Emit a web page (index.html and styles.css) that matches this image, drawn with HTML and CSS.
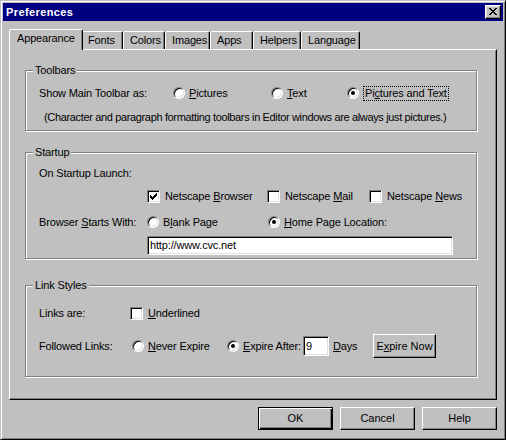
FILE: index.html
```html
<!DOCTYPE html>
<html lang="en">
<head>
<meta charset="utf-8">
<title>Preferences</title>
<link rel="stylesheet" href="styles.css">
</head>
<body>
<div class="window">
  <div class="titlebar">
    <span class="title">Preferences</span>
    <span class="close">
      <svg width="8" height="7" viewBox="0 0 8 7" shape-rendering="crispEdges"><path fill="#000" d="M0 0h2v1h-2z M6 0h2v1h-2z M1 1h2v1h-2z M5 1h2v1h-2z M2 2h4v1h-4z M3 3h2v1h-2z M2 4h4v1h-4z M1 5h2v1h-2z M5 5h2v1h-2z M0 6h2v1h-2z M6 6h2v1h-2z"/></svg>
    </span>
  </div>

  <div class="tabs">
    <div class="tab active w-appearance">Appearance</div>
    <div class="tab w-fonts">Fonts</div>
    <div class="tab w-colors">Colors</div>
    <div class="tab w-images">Images</div>
    <div class="tab w-apps">Apps</div>
    <div class="tab w-helpers">Helpers</div>
    <div class="tab w-language">Language</div>
  </div>

  <div class="panel">
    <div class="group g-toolbars">
      <div class="group-title">Toolbars</div>
      <div class="row t-row1">
        <span class="lbl-show">Show Main Toolbar as:</span>
        <span class="opt opt-pictures"><span class="radio"></span><span><span class="k">P</span>ictures</span></span>
        <span class="opt opt-text"><span class="radio"></span><span><span class="k">T</span>ext</span></span>
        <span class="opt"><span class="radio on"></span><span class="focus">Pi<span class="k">c</span>tures and Text</span></span>
      </div>
      <div class="row t-note">(Character and paragraph formatting toolbars in Editor windows are always just pictures.)</div>
    </div>

    <div class="group g-startup">
      <div class="group-title">Startup</div>
      <div class="row s-launch">On Startup Launch:</div>
      <div class="row s-checks">
        <span class="opt opt-c opt-browser"><span class="check"><svg width="7" height="7" viewBox="0 0 7 7" shape-rendering="crispEdges"><path fill="#000" d="M6 0h1v1h-1z M5 1h2v1h-2z M0 2h1v1h-1z M4 2h3v1h-3z M0 3h2v1h-2z M3 3h3v1h-3z M0 4h5v1h-5z M1 5h3v1h-3z M2 6h1v1h-1z"/></svg></span><span>Netscape <span class="k">B</span>rowser</span></span>
        <span class="opt opt-c opt-mail"><span class="check"></span><span>Netscape <span class="k">M</span>ail</span></span>
        <span class="opt opt-c"><span class="check"></span><span>Netscape <span class="k">N</span>ews</span></span>
      </div>
      <div class="row s-starts">
        <span class="lbl-starts">Browser <span class="k">S</span>tarts With:</span>
        <span class="opt opt-blank"><span class="radio"></span><span>B<span class="k">l</span>ank Page</span></span>
        <span class="opt"><span class="radio on"></span><span><span class="k">H</span>ome Page Location:</span></span>
      </div>
      <div class="field url">http://www.cvc.net</div>
    </div>

    <div class="group g-links">
      <div class="group-title">Link Styles</div>
      <div class="row l-links">
        <span class="lbl-links">Links are:</span>
        <span class="opt opt-c"><span class="check"></span><span><span class="k">U</span>nderlined</span></span>
      </div>
      <div class="row l-followed">
        <span class="lbl-followed">Followed Links:</span>
        <span class="opt opt-never"><span class="radio"></span><span><span class="k">N</span>ever Expire</span></span>
        <span class="opt"><span class="radio on"></span><span class="lbl-after"><span class="k">E</span>xpire After:</span></span>
        <span class="field days-field">9</span>
        <span class="lbl-days"><span class="k">D</span>ays</span>
        <button class="btn btn-expire">E<span class="k">x</span>pire Now</button>
      </div>
    </div>
  </div>

  <div class="buttons">
    <button class="btn btn-main default">OK</button>
    <button class="btn btn-main">Cancel</button>
    <button class="btn btn-main">Help</button>
  </div>
</div>
</body>
</html>
```

FILE: styles.css
```css
* { box-sizing: border-box; }

html, body { margin: 0; padding: 0; }

body {
  background: #c0c0c0;
  font-family: "Liberation Sans", Arial, sans-serif;
  font-size: 11px;
  line-height: 13px;
  letter-spacing: -0.15px;
  color: #000;
}

.k { text-decoration: underline; }

.window {
  width: 506px;
  height: 440px;
  padding: 2px;
  border: 1px solid;
  border-color: #c0c0c0 #000 #000 #c0c0c0;
  box-shadow: inset 1px 1px #fff, inset -1px -1px #808080;
  background: #c0c0c0;
}

.titlebar {
  height: 18px;
  background: #000080;
  display: flex;
  align-items: center;
  padding: 0 2px 0 3px;
}

.title { color: #fff; font-weight: bold; letter-spacing: 0.4px; }

.close {
  margin-left: auto;
  width: 16px;
  height: 14px;
  display: flex;
  align-items: center;
  justify-content: center;
  padding-bottom: 1px;
  background: #c0c0c0;
  border: 1px solid;
  border-color: #fff #000 #000 #fff;
  box-shadow: inset -1px -1px #808080, inset 1px 1px #dfdfdf;
}
.close svg { display: block; }

/* tabs */
.tabs {
  display: flex;
  align-items: flex-end;
  height: 20px;
  margin: 8px 6px 0;
  padding-left: 2px;
}

.tab {
  height: 18px;
  padding: 2px 0 0 6px;
  border: 1px solid;
  border-bottom: 0;
  border-color: #fff #000 transparent #fff;
  border-radius: 2px 2px 0 0;
  box-shadow: inset -1px 0 #808080;
  background: #c0c0c0;
  white-space: nowrap;
  flex: none;
}

.tab.active {
  height: 21px;
  margin: 0 -2px -1px;
  padding: 2px 0 0 7px;
  position: relative;
  z-index: 1;
}

.w-appearance { width: 74px; }
.w-fonts { width: 42px; }
.w-colors { width: 42px; }
.w-images { width: 45px; }
.w-apps { width: 43px; }
.w-helpers { width: 48px; }
.w-language { width: 59px; }

/* panel */
.panel {
  height: 351px;
  margin: 0 6px;
  border: 1px solid;
  border-color: #fff #000 #000 #fff;
  box-shadow: inset -1px -1px #808080;
  padding: 20px 0 0 15px;
}

.group {
  width: 452px;
  border: 1px solid #808080;
  box-shadow: 1px 1px 0 #fff, inset 1px 1px 0 #fff;
  padding: 0 0 0 13px;
}

.group-title {
  width: fit-content;
  margin: -7px 0 0 -6px;
  padding: 0 2px;
  background: #c0c0c0;
}

.g-toolbars { margin-bottom: 21px; padding-bottom: 3px; }
.g-startup { margin-bottom: 26px; padding-bottom: 3px; }
.g-links { padding-bottom: 18px; }

.row {
  display: flex;
  align-items: center;
  height: 20px;
  white-space: nowrap;
}

.t-row1 { margin-top: 6px; }
.t-note { margin-top: 4px; padding-left: 5px; letter-spacing: -0.35px; }

.s-launch { margin-top: 4px; }
.s-checks { margin-top: 3px; padding-left: 108px; }
.s-starts { margin-top: 6px; }

.l-links { margin-top: 11px; }
.l-followed { margin-top: 11px; height: 24px; }

.lbl-show { width: 134px; flex: none; }
.opt-pictures { width: 98px; }
.opt-text { width: 76px; }
.opt-browser { width: 120px; }
.opt-mail { width: 102px; }
.lbl-starts { width: 108px; flex: none; }
.opt-blank { width: 121px; }
.lbl-links { width: 91px; flex: none; }
.lbl-followed { width: 93px; flex: none; }
.opt-never { width: 95px; }
.lbl-after { width: 60px; }
.lbl-days { width: 40px; margin-left: 4px; }

.opt {
  display: flex;
  align-items: center;
  gap: 4px;
  flex: none;
}
.opt-c { gap: 5px; }

.radio {
  width: 12px;
  height: 12px;
  flex: none;
  border-radius: 50%;
  border: 1px solid;
  border-color: #808080 #fff #fff #808080;
  box-shadow: inset 1px 1px #000, inset -1px -1px #dfdfdf;
  background: #fff;
  display: flex;
  align-items: center;
  justify-content: center;
}
.radio.on::after {
  content: "";
  width: 4px;
  height: 4px;
  border-radius: 50%;
  background: #000;
}

.check {
  width: 13px;
  height: 13px;
  flex: none;
  border: 1px solid;
  border-color: #808080 #fff #fff #808080;
  box-shadow: inset 1px 1px #000, inset -1px -1px #dfdfdf;
  background: #fff;
  display: flex;
  align-items: center;
  justify-content: center;
}
.check svg { display: block; }

.focus {
  border: 1px dotted #000;
  padding: 0 1px;
}

.field {
  background: #fff;
  border: 1px solid;
  border-color: #808080 #fff #fff #808080;
  box-shadow: inset 1px 1px #000, inset -1px -1px #dfdfdf;
  display: flex;
  align-items: center;
  padding-left: 2px;
}

.url {
  margin: 4px 0 0 108px;
  width: 306px;
  height: 19px;
}

.days-field {
  width: 26px;
  height: 20px;
  padding-left: 2px;
  flex: none;
}

.btn {
  font: inherit;
  color: #000;
  background: #c0c0c0;
  padding: 0;
  border: 1px solid;
  border-color: #fff #000 #000 #fff;
  box-shadow: inset -1px -1px #808080;
  text-align: center;
}

.btn-expire {
  width: 63px;
  height: 24px;
  flex: none;
}

.buttons {
  display: flex;
  justify-content: flex-end;
  gap: 7px;
  margin: 7px 6px 0;
}

.btn-main { width: 75px; height: 23px; }

.btn.default {
  border-color: #000;
  box-shadow: inset 1px 1px #fff, inset -1px -1px #000, inset -2px -2px #808080;
}
```
